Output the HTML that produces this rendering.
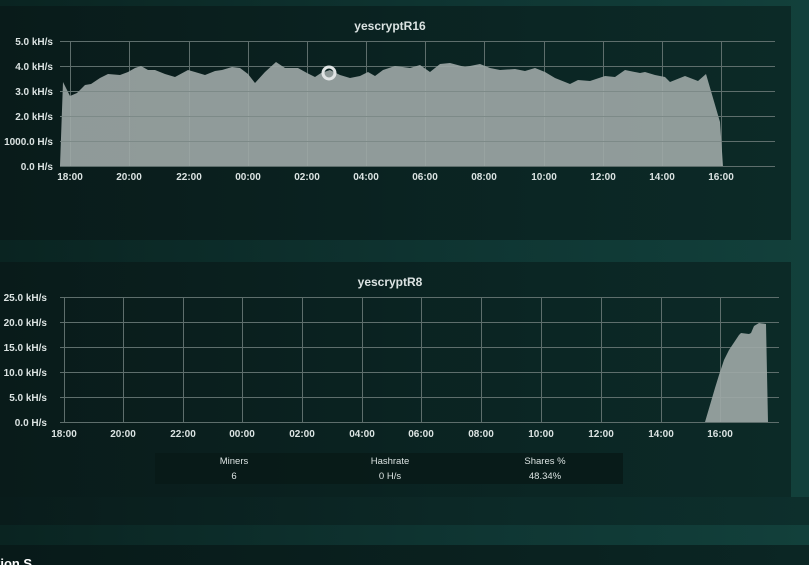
<!DOCTYPE html>
<html><head><meta charset="utf-8"><style>
html,body{margin:0;padding:0;width:809px;height:565px;overflow:hidden;background:#0f3834;font-family:"Liberation Sans",sans-serif;}
.bg{position:absolute;left:0;top:0;width:809px;height:565px;background:linear-gradient(90deg,#0a2421 0%,#0f3633 60%,#12403b 100%);}
.p{position:absolute;left:0;width:791px;background:linear-gradient(90deg,#091b1a,#0b2624 70%,#0c2a27);}
.band{position:absolute;left:0;top:497px;width:809px;height:28px;background:linear-gradient(90deg,#091c1b,#0c2927 60%,#0d2f2c);}
.bot{position:absolute;left:0;top:545px;width:809px;height:20px;background:linear-gradient(90deg,#081a19,#0a2220 70%,#0b2624);overflow:hidden;}
svg{position:absolute;left:0;top:0}
text{font-family:"Liberation Sans",sans-serif;fill:#dbe3e2;}
</style></head><body>
<div class="bg"></div>
<div class="p" style="top:6px;height:234px"></div>
<div class="p" style="top:262px;height:235px"></div>
<div class="band"></div>
<div class="bot"><span style="position:absolute;left:-4px;top:12px;color:#fff;font-size:13px;font-weight:bold;line-height:13px">tion S</span></div>
<svg width="809" height="565">
<g stroke="#5e6e6c" stroke-width="1">
<line x1="60" y1="41.5" x2="775" y2="41.5"/><line x1="60" y1="66.5" x2="775" y2="66.5"/><line x1="60" y1="91.5" x2="775" y2="91.5"/><line x1="60" y1="116.5" x2="775" y2="116.5"/><line x1="60" y1="141.5" x2="775" y2="141.5"/><line x1="60" y1="166.5" x2="775" y2="166.5"/>
<line x1="70.5" y1="41" x2="70.5" y2="166"/><line x1="129.5" y1="41" x2="129.5" y2="166"/><line x1="189.5" y1="41" x2="189.5" y2="166"/><line x1="248.5" y1="41" x2="248.5" y2="166"/><line x1="307.5" y1="41" x2="307.5" y2="166"/><line x1="366.5" y1="41" x2="366.5" y2="166"/><line x1="425.5" y1="41" x2="425.5" y2="166"/><line x1="484.5" y1="41" x2="484.5" y2="166"/><line x1="544.5" y1="41" x2="544.5" y2="166"/><line x1="603.5" y1="41" x2="603.5" y2="166"/><line x1="662.5" y1="41" x2="662.5" y2="166"/><line x1="721.5" y1="41" x2="721.5" y2="166"/>
</g>
<polygon fill="#9fa9a7" fill-opacity="0.9" points="60,166 63,82 70,96 77,93 85,85 91,84 100,78 108,74 120,75 128,72 135,68 141,66 148,70 155,70 165,74 175,77 188,70 195,72 205,75 215,71 222,70 232,67 240,68 248,74 255,83 265,72 276,62 285,68 298,68 307,73 315,77 321,73 330,70 340,75 350,78 360,76 368,72 375,76 383,70 395,66 410,68 420,65 430,72 440,64 450,63 465,67 480,64 490,68 500,70 515,69 525,71 535,68 545,72 555,78 570,84 578,80 590,81 605,76 615,77 625,70 640,73 645,72 655,75 665,77 670,82 685,76 698,81 706,74 720,122 723,166"/>
<g stroke="#6c7a78" stroke-width="1" opacity="0.6">
<line x1="60" y1="91.5" x2="720" y2="91.5"/><line x1="60" y1="116.5" x2="720" y2="116.5"/><line x1="60" y1="141.5" x2="722" y2="141.5"/>
</g>
<circle cx="329" cy="73" r="6" fill="none" stroke="#e0e4e4" stroke-width="3"/>
<g font-size="10" font-weight="bold" text-anchor="end">
<text x="53" y="45">5.0 kH/s</text><text x="53" y="70">4.0 kH/s</text><text x="53" y="95">3.0 kH/s</text><text x="53" y="120">2.0 kH/s</text><text x="53" y="145">1000.0 H/s</text><text x="53" y="170">0.0 H/s</text>
</g>
<g font-size="10" font-weight="bold" text-anchor="middle">
<text x="70" y="180">18:00</text><text x="129" y="180">20:00</text><text x="189" y="180">22:00</text><text x="248" y="180">00:00</text><text x="307" y="180">02:00</text><text x="366" y="180">04:00</text><text x="425" y="180">06:00</text><text x="484" y="180">08:00</text><text x="544" y="180">10:00</text><text x="603" y="180">12:00</text><text x="662" y="180">14:00</text><text x="721" y="180">16:00</text>
<text x="390" y="30" font-size="12" fill="#fff">yescryptR16</text>
<text x="390" y="286" font-size="12" fill="#fff">yescryptR8</text>
</g>
<g stroke="#5e6e6c" stroke-width="1">
<line x1="60" y1="297.5" x2="779" y2="297.5"/><line x1="60" y1="322.5" x2="779" y2="322.5"/><line x1="60" y1="347.5" x2="779" y2="347.5"/><line x1="60" y1="372.5" x2="779" y2="372.5"/><line x1="60" y1="397.5" x2="779" y2="397.5"/><line x1="60" y1="422.5" x2="779" y2="422.5"/>
<line x1="64.5" y1="297" x2="64.5" y2="422"/><line x1="123.5" y1="297" x2="123.5" y2="422"/><line x1="183.5" y1="297" x2="183.5" y2="422"/><line x1="242.5" y1="297" x2="242.5" y2="422"/><line x1="302.5" y1="297" x2="302.5" y2="422"/><line x1="362.5" y1="297" x2="362.5" y2="422"/><line x1="421.5" y1="297" x2="421.5" y2="422"/><line x1="481.5" y1="297" x2="481.5" y2="422"/><line x1="541.5" y1="297" x2="541.5" y2="422"/><line x1="601.5" y1="297" x2="601.5" y2="422"/><line x1="661.5" y1="297" x2="661.5" y2="422"/><line x1="720.5" y1="297" x2="720.5" y2="422"/>
</g>
<polygon fill="#9fa9a7" fill-opacity="0.9" points="705,422 710,405 715,388 719,375 724,360 729,350 733,344 739,335 741,333 749,334 751,333 754,326 759,323 766,324 768,422"/>
<g font-size="10" font-weight="bold" text-anchor="end">
<text x="47" y="301">25.0 kH/s</text><text x="47" y="326">20.0 kH/s</text><text x="47" y="351">15.0 kH/s</text><text x="47" y="376">10.0 kH/s</text><text x="47" y="401">5.0 kH/s</text><text x="47" y="426">0.0 H/s</text>
</g>
<g font-size="10" font-weight="bold" text-anchor="middle">
<text x="64" y="437">18:00</text><text x="123" y="437">20:00</text><text x="183" y="437">22:00</text><text x="242" y="437">00:00</text><text x="302" y="437">02:00</text><text x="362" y="437">04:00</text><text x="421" y="437">06:00</text><text x="481" y="437">08:00</text><text x="541" y="437">10:00</text><text x="601" y="437">12:00</text><text x="661" y="437">14:00</text><text x="720" y="437">16:00</text>
</g>
<rect x="155" y="453" width="468" height="31" fill="#081a18" opacity="0.85"/>
<g font-size="9.5" text-anchor="middle">
<text x="234" y="464">Miners</text><text x="390" y="464">Hashrate</text><text x="545" y="464">Shares %</text>
<text x="234" y="479">6</text><text x="390" y="479">0 H/s</text><text x="545" y="479">48.34%</text>
</g>
</svg>
</body></html>
